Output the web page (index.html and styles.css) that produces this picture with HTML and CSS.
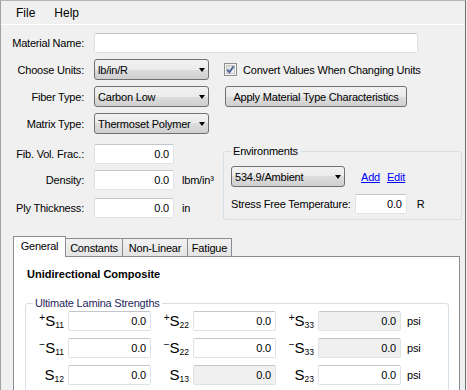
FILE: index.html
```html
<!DOCTYPE html>
<html>
<head>
<meta charset="utf-8">
<link rel="stylesheet" href="styles.css">
</head>
<body>
<div class="win">
  <div class="menubar"><span>File</span><span>Help</span></div>
  <div class="form">
    <div class="row">
      <div class="lbl">Material Name:</div>
      <div class="tb name"></div>
    </div>
    <div class="row">
      <div class="lbl">Choose Units:</div>
      <div class="cb">lb/in/R</div>
      <svg class="chk" width="13" height="13" viewBox="0 0 13 13">
        <defs><linearGradient id="cg" x1="0" y1="0" x2="1" y2="1"><stop offset="0" stop-color="#dcdcdc"/><stop offset="1" stop-color="#f6f6f6"/></linearGradient></defs>
        <rect x="0.5" y="0.5" width="12" height="12" fill="#f4f4f4" stroke="#8e8f8f"/>
        <rect x="2.5" y="2.5" width="8" height="8" fill="url(#cg)" stroke="#c6c6c6"/>
        <path d="M3.3 6.6 L5.4 9.2 L9.6 3.4" fill="none" stroke="#4a5f97" stroke-width="1.8"/>
      </svg>
      <span class="chktxt">Convert Values When Changing Units</span>
    </div>
    <div class="row">
      <div class="lbl">Fiber Type:</div>
      <div class="cb">Carbon Low</div>
      <div class="btn">Apply Material Type Characteristics</div>
    </div>
    <div class="row">
      <div class="lbl">Matrix Type:</div>
      <div class="cb">Thermoset Polymer</div>
    </div>
    <div class="lower">
      <div class="leftcol">
        <div class="lrow r1">
          <div class="lbl">Fib. Vol. Frac.:</div>
          <div class="tb num">0.0</div>
        </div>
        <div class="lrow r2">
          <div class="lbl">Density:</div>
          <div class="tb num">0.0</div>
          <span class="unit">lbm/in³</span>
        </div>
        <div class="lrow r3">
          <div class="lbl">Ply Thickness:</div>
          <div class="tb num">0.0</div>
          <span class="unit">in</span>
        </div>
      </div>
      <div class="grp env">
        <span class="gtitle">Environments</span>
        <div class="erow">
          <div class="cb ecb">534.9/Ambient</div>
          <a class="lnk add">Add</a>
          <a class="lnk edit">Edit</a>
        </div>
        <div class="erow srow">
          <span>Stress Free Temperature:</span>
          <div class="tb stf">0.0</div>
          <span class="unitR">R</span>
        </div>
      </div>
    </div>
  </div>
  <div class="tabs">
    <div class="tabstrip">
      <div class="tab sel">General</div>
      <div class="tab t2">Constants</div>
      <div class="tab t3">Non-Linear</div>
      <div class="tab t4">Fatigue</div>
    </div>
    <div class="panel">
      <div class="ptitle">Unidirectional Composite</div>
      <div class="grp ult">
        <span class="gtitle navy">Ultimate Lamina Strengths</span>
        <div class="srow3">
          <div class="sl"><span class="sp">+</span><span class="S">S</span><span class="sb">11</span></div>
          <div class="tb sv">0.0</div>
          <div class="sl"><span class="sp">+</span><span class="S">S</span><span class="sb">22</span></div>
          <div class="tb sv">0.0</div>
          <div class="sl"><span class="sp">+</span><span class="S">S</span><span class="sb">33</span></div>
          <div class="tb sv dis">0.0</div>
          <span class="psi">psi</span>
        </div>
        <div class="srow3">
          <div class="sl"><span class="sp">−</span><span class="S">S</span><span class="sb">11</span></div>
          <div class="tb sv">0.0</div>
          <div class="sl"><span class="sp">−</span><span class="S">S</span><span class="sb">22</span></div>
          <div class="tb sv">0.0</div>
          <div class="sl"><span class="sp">−</span><span class="S">S</span><span class="sb">33</span></div>
          <div class="tb sv dis">0.0</div>
          <span class="psi">psi</span>
        </div>
        <div class="srow3">
          <div class="sl"><span class="S">S</span><span class="sb">12</span></div>
          <div class="tb sv">0.0</div>
          <div class="sl"><span class="S">S</span><span class="sb">13</span></div>
          <div class="tb sv dis">0.0</div>
          <div class="sl"><span class="S">S</span><span class="sb">23</span></div>
          <div class="tb sv">0.0</div>
          <span class="psi">psi</span>
        </div>
      </div>
    </div>
  </div>
</div>
</body>
</html>
```
FILE: styles.css
```css
* { box-sizing: border-box; }
html, body { margin: 0; padding: 0; }
body {
  background: #f0f0f0;
  font-family: "Liberation Sans", Arial, sans-serif;
  font-size: 11px;
  letter-spacing: -0.2px;
  color: #000;
  width: 467px;
  height: 390px;
  overflow: hidden;
}
.win {
  width: 466px;
  height: 390px;
  border-left: 1px solid #a0a0a0;
  border-right: 1px solid #6e6e6e;
  border-top: 1px solid #b4b4b4;
  overflow: hidden;
}
.menubar {
  height: 24px;
  border-bottom: 1px solid #ffffff;
  display: flex;
  align-items: center;
  padding-left: 15px;
  gap: 19px;
  font-size: 12px;
  letter-spacing: 0;
}
.form { padding-top: 7px; }
.row {
  display: flex;
  align-items: center;
  height: 21px;
  margin-bottom: 6px;
}
.lbl {
  width: 83px;
  text-align: right;
  margin-right: 10px;
  white-space: nowrap;
}
.tb {
  height: 20px;
  background: #fff;
  border: 1px solid #dfe3e8;
  border-top-color: #c2c5cb;
  border-radius: 2px;
  text-align: right;
  padding: 0 4px;
  line-height: 18px;
  white-space: nowrap;
}
.name { width: 324px; }
.num { width: 80px; }
.cb {
  position: relative;
  width: 115px;
  height: 21px;
  border: 1px solid #707070;
  border-radius: 3px;
  background: linear-gradient(#f2f2f2 0%, #ebebeb 50%, #dddddd 50%, #cfcfcf 100%);
  display: flex;
  align-items: center;
  padding-left: 3px;
  white-space: nowrap;
}
.cb::after {
  content: "";
  position: absolute;
  right: 3px;
  top: 8px;
  border-left: 3.5px solid transparent;
  border-right: 3.5px solid transparent;
  border-top: 4px solid #000;
}
.chk { margin-left: 15px; flex: none; }
.chktxt { margin-left: 6px; white-space: nowrap; }
.btn {
  margin-left: 16px;
  width: 182px;
  height: 21px;
  border: 1px solid #707070;
  border-radius: 3px;
  background: linear-gradient(#f2f2f2 0%, #ebebeb 50%, #dddddd 50%, #cfcfcf 100%);
  display: flex;
  align-items: center;
  justify-content: center;
  white-space: nowrap;
}
.lower { display: flex; padding-top: 4px; }
.leftcol { width: 222px; flex: none; }
.lrow { display: flex; align-items: center; height: 20px; }
.r2 { margin-top: 6px; }
.r3 { margin-top: 8px; }
.unit { margin-left: 8px; }
.grp {
  position: relative;
  border: 1px solid #d5dfe5;
  border-radius: 3px;
}
.gtitle {
  position: absolute;
  top: -7px;
  left: 7px;
  padding: 0 2px;
  background: #f0f0f0;
  line-height: 13px;
  white-space: nowrap;
}
.env {
  margin-top: 7px;
  width: 239px;
  height: 69px;
  padding: 14px 0 0 7px;
}
.erow { display: flex; align-items: center; }
.ecb { width: 114px; }
.lnk { color: #0000ff; text-decoration: underline; }
.add { margin-left: 16px; }
.edit { margin-left: 7px; }
.srow { margin-top: 7px; height: 20px; }
.stf { width: 52px; margin-left: 4px; }
.unitR { margin-left: 10px; }
.tabs { margin: 16px 0 0 12px; width: 447px; }
.tabstrip { display: flex; align-items: flex-end; height: 20px; position: relative; z-index: 1; }
.tab {
  height: 18px;
  border: 1px solid #898c95;
  border-bottom: none;
  border-left: none;
  background: linear-gradient(#f2f2f2, #e3e3e3);
  display: flex;
  align-items: center;
  justify-content: center;
  white-space: nowrap;
}
.tab.sel {
  height: 21px;
  border-left: 1px solid #898c95;
  background: #fff;
  width: 53px;
  margin-bottom: -1px;
  align-items: flex-start;
  padding-top: 3px;
}
.t2 { width: 57px; }
.t3 { width: 65px; }
.t4 { width: 44px; }
.panel {
  background: #fff;
  border: 1px solid #898c95;
  height: 160px;
  padding: 11px 0 0 13px;
}
.ptitle { font-weight: bold; font-size: 11px; line-height: 13px; letter-spacing: 0; }
.ult {
  margin: 22px 0 0 -2px;
  width: 424px;
  height: 120px;
  padding-top: 7px;
}
.navy { background: #fff; color: #28285a; }
.srow3 { display: flex; align-items: center; height: 20px; margin-bottom: 7px; }
.sl {
  width: 38px;
  margin-right: 4px;
  height: 20px;
  display: flex;
  justify-content: flex-end;
  align-items: flex-end;
  letter-spacing: 0;
}
.sp { align-self: flex-start; font-size: 10px; line-height: 10px; margin-top: 2px; }
.S { font-size: 15px; line-height: 16px; margin-bottom: 2px; }
.sb { font-size: 8.5px; line-height: 10px; margin-bottom: 1px; }
.sv { width: 83px; }
.dis { background: #f0f0f0; }
.psi { margin-left: 6px; }
```
